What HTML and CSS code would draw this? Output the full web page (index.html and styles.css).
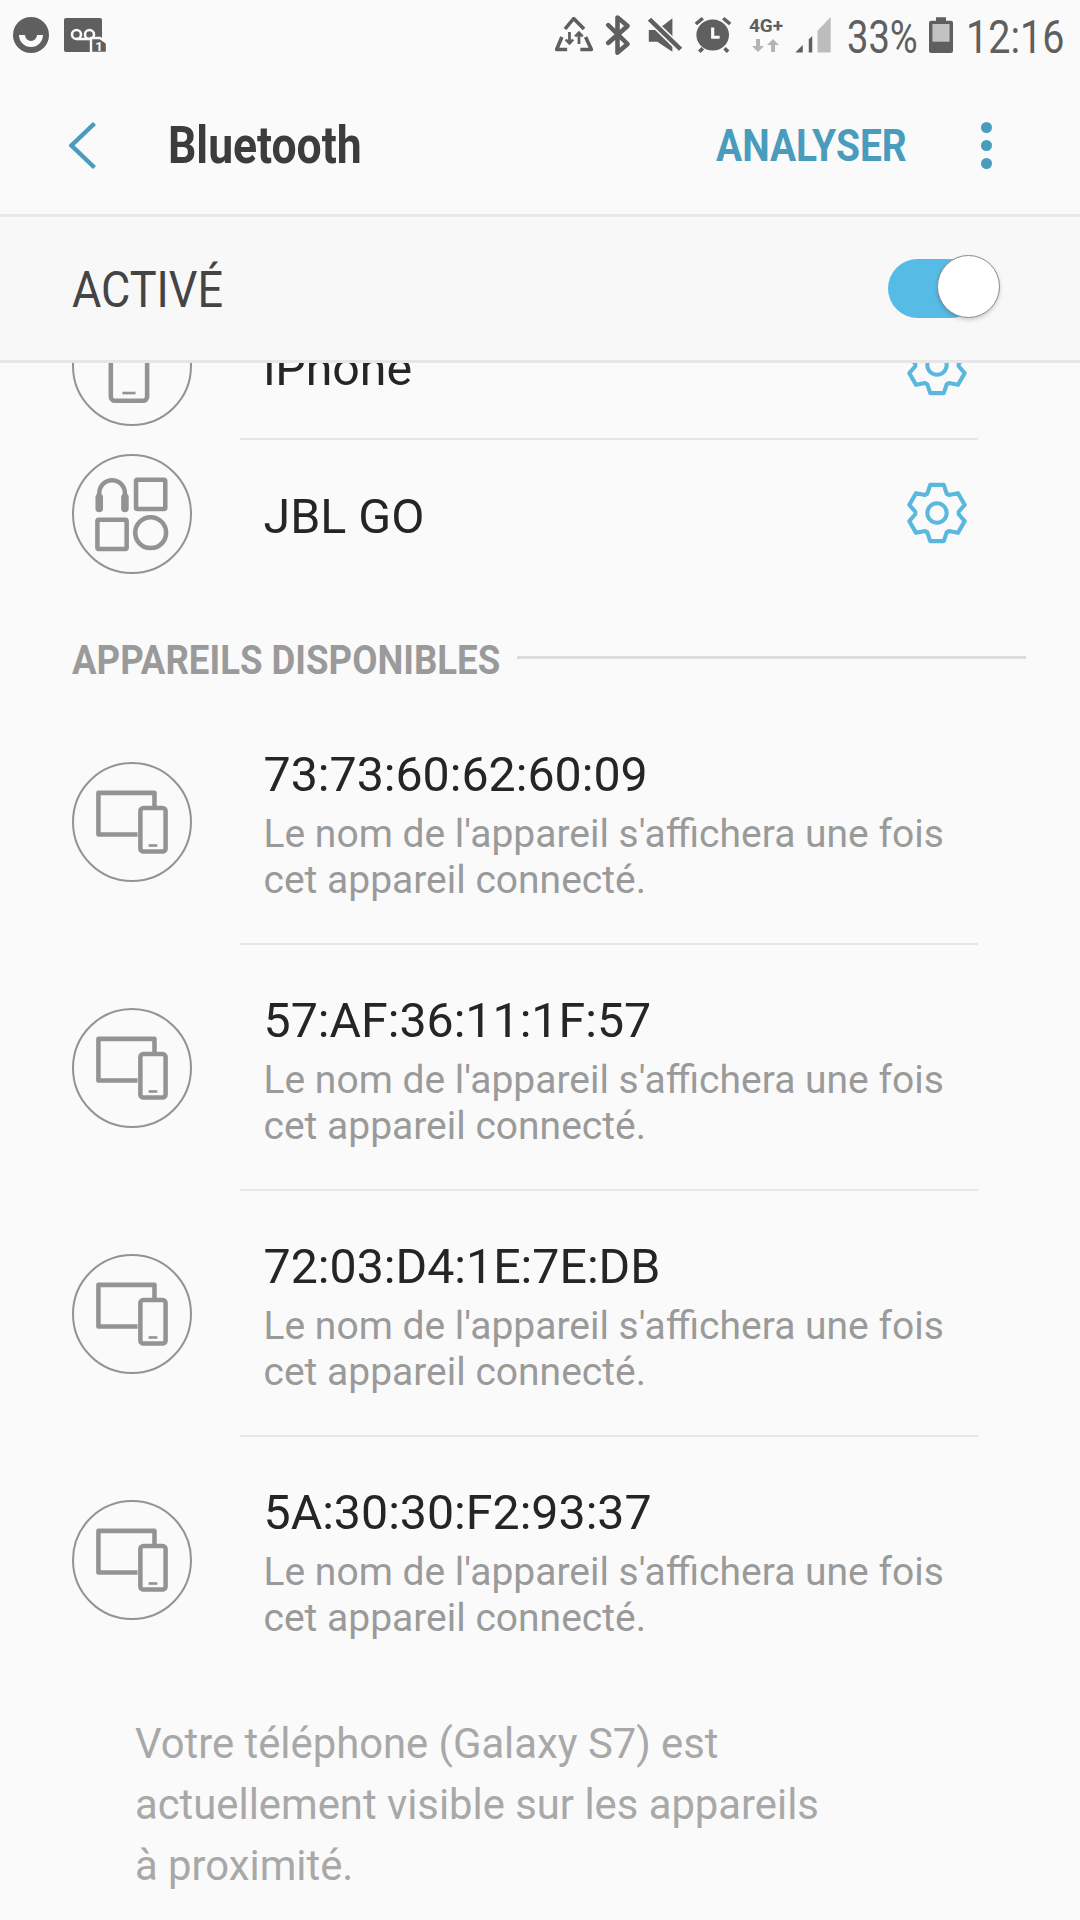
FILE: index.html
```html
<!DOCTYPE html>
<html lang="fr">
<head>
  <meta charset="UTF-8">
  <meta name="viewport" content="width=device-width, initial-scale=1.0">
  <title>Bluetooth</title>
  <link rel="stylesheet" href="styles.css">
</head>
<body>
  <svg class="defs" width="0" height="0">
    <symbol id="gear" viewBox="-32 -32 64 64">
      <path d="M-7,-29 L7,-29 10,-20 12.3,-18.7 21.6,-20.5 28.6,-8.4 22.4,-1.3 22.4,1.3 28.6,8.4 21.6,20.5 12.3,18.7 10,20 7,29 -7,29 -10,20 -12.3,18.7 -21.6,20.5 -28.6,8.4 -22.4,1.3 -22.4,-1.3 -28.6,-8.4 -21.6,-20.5 -12.3,-18.7 -10,-20 Z" fill="none" stroke="#5ab8de" stroke-width="4.2" stroke-linejoin="round"/>
      <circle r="10" fill="none" stroke="#5ab8de" stroke-width="4.2"/>
    </symbol>
    <symbol id="device" viewBox="0 0 119 119">
      <circle cx="59.5" cy="59.5" r="58.5" fill="none" stroke="#939393" stroke-width="2"/>
      <path d="M65,72 H26.2 V30.6 H81.8 V44" fill="none" stroke="#939393" stroke-width="4.5" stroke-linejoin="round"/>
      <rect x="67.8" y="45.6" width="25" height="43.2" rx="3" fill="none" stroke="#939393" stroke-width="4.5"/>
      <rect x="76" y="81.5" width="8.6" height="2.6" fill="#939393"/>
    </symbol>
  </svg>

  <div class="app">
    <div class="status-bar">
      <div class="status-left">
        <svg class="ic-smile" width="36" height="36" viewBox="13 17 36 36">
          <circle cx="31" cy="35" r="18" fill="#5f5f5f"/>
          <path d="M19,35 A12,12 0 0 0 43,35 H37 A6,6 0 0 1 25,35 Z" fill="#fafafa"/>
        </svg>
        <svg class="ic-voicemail" width="44" height="36" viewBox="64 17 44 36">
          <rect x="64" y="18" width="38" height="34" rx="2" fill="#5f5f5f"/>
          <circle cx="76.5" cy="34.5" r="4.5" fill="none" stroke="#fafafa" stroke-width="2.6"/>
          <circle cx="89.5" cy="34.5" r="4.5" fill="none" stroke="#fafafa" stroke-width="2.6"/>
          <path d="M76.5,39 H89.5" stroke="#fafafa" stroke-width="2.6"/>
          <path d="M91,38 H100 L107,43 V53 H91 Z" fill="#5f5f5f" stroke="#fafafa" stroke-width="2.4"/>
          <text class="badge-num" x="99" y="50.5">1</text>
        </svg>
      </div>
      <div class="status-right">
        <svg class="ic-recycle" width="38" height="36" viewBox="0 0 36 36" preserveAspectRatio="none" fill="none" stroke="#5f5f5f" stroke-width="3.4" stroke-linejoin="round">
          <path d="M9.5,12 L17.7,1.5 L27.5,12"/>
          <path d="M6.5,20 L1.5,32.5 H11.5"/>
          <path d="M29,20 L34.5,32.5 H24"/>
          <path d="M13.7,15 V26 M10.2,22.5 L13.7,26.5 L17.2,22.5 M22.7,27 V16 M19.2,19.5 L22.7,15.5 L26.2,19.5" stroke-width="2.6"/>
        </svg>
        <svg class="ic-bt" width="27" height="42" viewBox="0 0 26 42" preserveAspectRatio="none" fill="none" stroke="#5f5f5f" stroke-width="4.4" stroke-linejoin="round" stroke-linecap="round">
          <path d="M4,11 L22.7,30 L13,38.7 V3.4 L22.7,12 L4,29"/>
        </svg>
        <svg class="ic-mute" width="36" height="36" viewBox="0 0 34 36" preserveAspectRatio="none">
          <path d="M1.7,13 H9.7 L24,1.3 V34.7 L9.7,24.7 H1.7 Z" fill="#5f5f5f"/>
          <path d="M2.3,2.3 L31.7,32.3" stroke="#fafafa" stroke-width="7.5"/>
          <path d="M2.3,2.3 L31.7,32.3" stroke="#5f5f5f" stroke-width="4.4"/>
        </svg>
        <svg class="ic-alarm" width="40" height="40" viewBox="0 0 38 40" preserveAspectRatio="none" fill="none" stroke="#5f5f5f" stroke-width="3.4">
          <circle cx="18.7" cy="20" r="15.5" fill="#5f5f5f" stroke="none"/>
          <path d="M18.7,12.5 V22.3 H25.3" stroke="#fafafa" stroke-width="3"/>
          <path d="M2.7,9 L9.3,3.3 M28.7,3.3 L35.3,9 M6,36.7 L9.3,33.3 M30,33.3 L33.3,36.7"/>
        </svg>
        <div class="net">
          <span class="net-label">4G+</span>
          <svg width="28" height="13" viewBox="0 0 28 13" fill="#b4b4b4">
            <path d="M4,0 H8 V7 H12 L6,13 L0,7 H4 Z"/>
            <path d="M19,13 H23 V6 H27 L21,0 L15,6 H19 Z"/>
          </svg>
        </div>
        <svg class="ic-signal" width="36" height="36" viewBox="0 0 34 36" preserveAspectRatio="none">
          <path d="M0.3,35.5 L7.3,28 V35.5 Z" fill="#5f5f5f"/>
          <path d="M13,22.3 L16.3,19 V35.5 H13 Z" fill="#5f5f5f"/>
          <path d="M21.3,13.7 L33.7,0 V35.5 H21.3 Z" fill="#bdbdbd"/>
        </svg>
        <span class="status-text pct"><span class="cond">33%</span></span>
        <svg class="ic-battery" width="24" height="36" viewBox="0 0 23 36" preserveAspectRatio="none">
          <path d="M6.7,0.3 H16.3 V3.7 H21 Q23,3.7 23,5.7 V34 Q23,36 21,36 H2 Q0,36 0,34 V5.7 Q0,3.7 2,3.7 H6.7 Z" fill="#5f5f5f"/>
          <rect x="3.3" y="7" width="16.4" height="17.7" fill="#c2c2c2"/>
        </svg>
        <span class="status-text time"><span class="cond">12:16</span></span>
      </div>
    </div>

    <div class="topbar">
      <svg class="back" width="27" height="47" viewBox="0 0 27 47" fill="none" stroke="#4a9cbd" stroke-width="4.4">
        <path d="M25.5,1.5 L2.5,23.5 L25.5,45.5"/>
      </svg>
      <h1 class="title"><span class="cond">Bluetooth</span></h1>
      <span class="action"><span class="cond">ANALYSER</span></span>
      <div class="more"><i></i><i></i><i></i></div>
    </div>

    <div class="switch-bar">
      <span class="switch-label"><span class="cond">ACTIVÉ</span></span>
      <div class="toggle"><div class="knob"></div></div>
    </div>

    <div class="list">
      <div class="scroll">
        <div class="row paired">
          <svg class="circle-ic" width="120" height="120" viewBox="0 0 119 119">
            <circle cx="59.5" cy="59.5" r="58.5" fill="none" stroke="#939393" stroke-width="2"/>
            <rect x="38.5" y="24" width="36" height="70" rx="4" fill="none" stroke="#939393" stroke-width="4.5"/>
            <rect x="50" y="85" width="13" height="2.6" fill="#939393"/>
          </svg>
          <span class="name">iPhone</span>
          <svg class="gear" width="62" height="62"><use href="#gear"/></svg>
        </div>
        <div class="divider"></div>
        <div class="row paired">
          <svg class="circle-ic" width="120" height="120" viewBox="0 0 119 119" fill="none" stroke="#939393">
            <circle cx="59.5" cy="59.5" r="58.5" stroke-width="2"/>
            <path d="M27,50 V39 A12.7,13 0 0 1 52.5,39 V50" stroke-width="4.5"/>
            <path d="M27,43 V54 M52.5,43 V54" stroke-width="7.5" stroke-linecap="round"/>
            <rect x="63.5" y="25.6" width="29" height="29" rx="1.5" stroke-width="4.5"/>
            <rect x="25.2" y="65.2" width="29" height="29" rx="1.5" stroke-width="4.5"/>
            <circle cx="78" cy="78" r="15.3" stroke-width="4.5"/>
          </svg>
          <span class="name">JBL GO</span>
          <svg class="gear" width="62" height="62"><use href="#gear"/></svg>
        </div>

        <div class="section-head">
          <span class="section-label"><span class="cond">APPAREILS DISPONIBLES</span></span>
          <div class="section-line"></div>
        </div>

        <div class="row device">
          <svg class="circle-ic" width="120" height="120"><use href="#device"/></svg>
          <div class="info">
            <div class="name">73:73:60:62:60:09</div>
            <div class="sub">Le nom de l'appareil s'affichera une fois cet appareil connecté.</div>
          </div>
        </div>
        <div class="divider"></div>
        <div class="row device">
          <svg class="circle-ic" width="120" height="120"><use href="#device"/></svg>
          <div class="info">
            <div class="name">57:AF:36:11:1F:57</div>
            <div class="sub">Le nom de l'appareil s'affichera une fois cet appareil connecté.</div>
          </div>
        </div>
        <div class="divider"></div>
        <div class="row device">
          <svg class="circle-ic" width="120" height="120"><use href="#device"/></svg>
          <div class="info">
            <div class="name">72:03:D4:1E:7E:DB</div>
            <div class="sub">Le nom de l'appareil s'affichera une fois cet appareil connecté.</div>
          </div>
        </div>
        <div class="divider"></div>
        <div class="row device">
          <svg class="circle-ic" width="120" height="120"><use href="#device"/></svg>
          <div class="info">
            <div class="name">5A:30:30:F2:93:37</div>
            <div class="sub">Le nom de l'appareil s'affichera une fois cet appareil connecté.</div>
          </div>
        </div>

        <p class="note">Votre téléphone (Galaxy S7) est<br>actuellement visible sur les appareils<br>à proximité.</p>
      </div>
    </div>
  </div>
</body>
</html>
```

FILE: styles.css
```css
* {
  box-sizing: border-box;
  margin: 0;
  padding: 0;
}
body {
  font-family: Roboto, "Liberation Sans", sans-serif;
  background-color: #fafafa;
}
.defs {
  display: block;
  height: 0;
}
.app {
  width: 1080px;
  height: 1920px;
  display: flex;
  flex-direction: column;
  overflow: hidden;
}

/* Roboto squeezed to the condensed cut the phone uses */
.cond {
  display: inline-block;
  white-space: nowrap;
  transform: scaleX(0.82);
  transform-origin: left center;
}
.time .cond { transform: scaleX(0.85); }
.title .cond { transform: scaleX(0.855); }
.action .cond { transform: scaleX(0.865); }
.switch-label .cond { transform: scaleX(0.9); }
.section-label .cond { transform: scaleX(0.915); }

/* Status bar */
.status-bar {
  height: 70px;
  flex: none;
  display: flex;
  justify-content: space-between;
  align-items: center;
  padding: 0 15px 0 13px;
}
.status-left, .status-right {
  display: flex;
  align-items: center;
}
.ic-voicemail { margin-left: 15px; }
.badge-num {
  font-family: Roboto, sans-serif;
  font-size: 13px;
  font-weight: 700;
  fill: #fafafa;
  text-anchor: middle;
}
.ic-bt { margin-left: 11px; }
.ic-mute { margin-left: 16px; }
.ic-alarm { margin-left: 10px; }
.net {
  width: 38px;
  margin-left: 14px;
  display: flex;
  flex-direction: column;
  align-items: center;
  gap: 6px;
}
.net-label {
  font-size: 19px;
  line-height: 15px;
  font-weight: 700;
  color: #5f5f5f;
  white-space: nowrap;
}
.ic-signal { margin-left: 10px; }
.status-text {
  display: block;
  padding-top: 3px;
  font-size: 46.5px;
  line-height: 52px;
  color: #5f5f5f;
}
.pct {
  width: 70px;
  margin-left: 16px;
}
.ic-battery { margin-left: 12px; }
.time {
  width: 99px;
  margin-left: 13px;
}

/* Top bar */
.topbar {
  height: 147px;
  flex: none;
  display: flex;
  align-items: center;
  border-bottom: 3px solid #e8e8e8;
  padding: 6px 0 0 68.5px;
}
.title {
  width: 548px;
  margin-left: 72.5px;
  font-size: 52px;
  font-weight: 700;
  color: #3c3c3c;
}
.action {
  width: 230px;
  font-size: 45px;
  font-weight: 700;
  color: #4a9cbd;
}
.more {
  width: 11px;
  margin-left: 35px;
  display: flex;
  flex-direction: column;
  gap: 7px;
}
.more i {
  display: block;
  width: 11px;
  height: 11px;
  border-radius: 50%;
  background-color: #4a9cbd;
}

/* On/off bar */
.switch-bar {
  height: 146px;
  flex: none;
  display: flex;
  justify-content: space-between;
  align-items: center;
  background-color: #f8f8f8;
  border-bottom: 3px solid #e6e6e6;
  padding: 0 100px 0 72px;
}
.switch-label {
  padding-top: 2px;
  font-size: 50px;
  color: #444;
}
.toggle {
  position: relative;
  width: 92px;
  height: 59px;
  border-radius: 30px;
  background-color: #56bce6;
}
.knob {
  position: absolute;
  top: -4px;
  right: -20px;
  width: 63px;
  height: 63px;
  border-radius: 50%;
  background-color: #fff;
  border: 1px solid #8c8c8c;
  box-shadow: 0 2px 4px rgba(0, 0, 0, 0.18);
}

/* List */
.list {
  flex: 1;
  overflow: hidden;
}
.scroll {
  margin-top: -71px;
}
.row {
  display: flex;
  align-items: center;
  padding-left: 72px;
}
.paired {
  height: 146px;
  padding-right: 112px;
}
.device {
  height: 244px;
}
.circle-ic {
  flex: none;
  margin: 2px 71.5px 0 0;
}
.name {
  font-size: 48.3px;
  line-height: 56px;
  color: #252525;
}
.paired .name {
  flex: 1;
  padding-top: 7px;
}
.gear {
  flex: none;
}
.info {
  width: 720px;
  padding-top: 7px;
}
.sub {
  margin-top: 8px;
  font-size: 39px;
  line-height: 46px;
  color: #9a9a9a;
}
.divider {
  height: 2px;
  margin: 0 102px 0 240px;
  background-color: #e6e6e6;
}
.section-head {
  height: 113px;
  display: flex;
  align-items: center;
  padding: 51px 54px 22px 72px;
}
.section-label {
  width: 445px;
  flex: none;
  padding-top: 7px;
  font-size: 40px;
  line-height: 40px;
  font-weight: 700;
  color: #9a9a9a;
}
.section-line {
  flex: 1;
  height: 3px;
  background-color: #dcdcdc;
}
.note {
  padding: 32px 0 0 135px;
  font-size: 41.8px;
  line-height: 61px;
  color: #a8a8a8;
}
```
